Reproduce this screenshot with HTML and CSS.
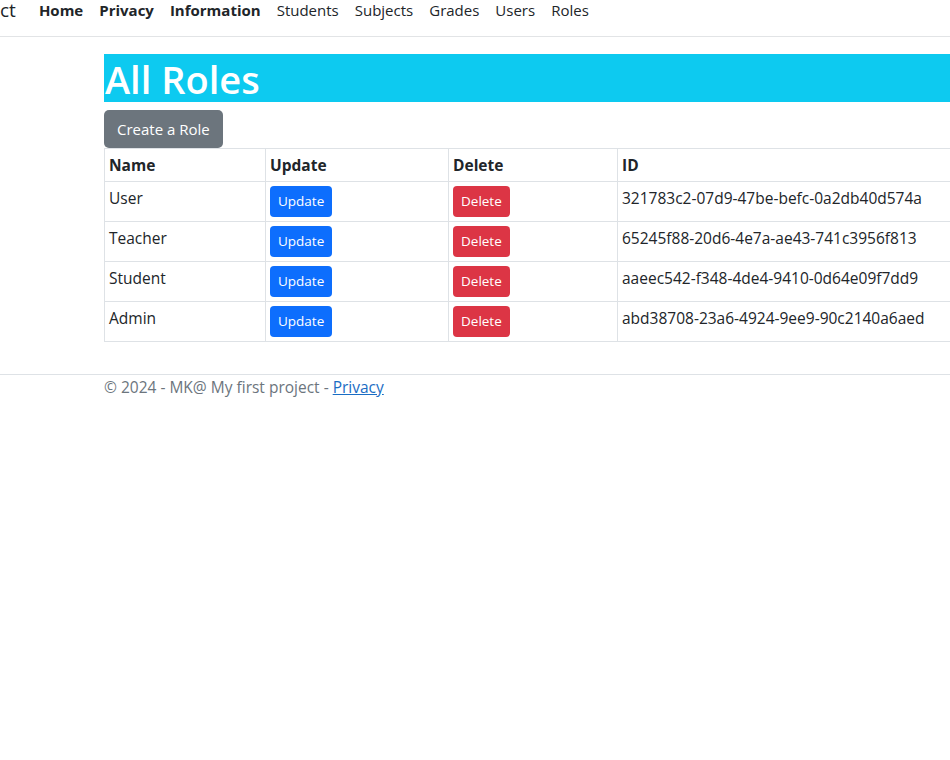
FILE: index.html
```html
<!DOCTYPE html>
<html lang="en">
<head>
<meta charset="utf-8">
<title>All Roles</title>
<link rel="stylesheet" href="styles.css">
</head>
<body>
<header class="navbar">
  <span class="brand">ct</span>
  <nav class="nav">
    <a class="nav-link bold" href="#">Home</a>
    <a class="nav-link bold" href="#">Privacy</a>
    <a class="nav-link bold" href="#">Information</a>
    <a class="nav-link" href="#">Students</a>
    <a class="nav-link" href="#">Subjects</a>
    <a class="nav-link" href="#">Grades</a>
    <a class="nav-link" href="#">Users</a>
    <a class="nav-link" href="#">Roles</a>
  </nav>
</header>
<main class="container">
  <h1 class="title">All Roles</h1>
  <a class="btn btn-secondary" href="#">Create a Role</a>
  <table class="table">
    <thead>
      <tr>
        <th class="col-name">Name</th>
        <th class="col-update">Update</th>
        <th class="col-delete">Delete</th>
        <th>ID</th>
      </tr>
    </thead>
    <tbody>
      <tr>
        <td>User</td>
        <td><a class="btn-sm btn-primary" href="#">Update</a></td>
        <td><a class="btn-sm btn-danger" href="#">Delete</a></td>
        <td>321783c2-07d9-47be-befc-0a2db40d574a</td>
      </tr>
      <tr>
        <td>Teacher</td>
        <td><a class="btn-sm btn-primary" href="#">Update</a></td>
        <td><a class="btn-sm btn-danger" href="#">Delete</a></td>
        <td>65245f88-20d6-4e7a-ae43-741c3956f813</td>
      </tr>
      <tr>
        <td>Student</td>
        <td><a class="btn-sm btn-primary" href="#">Update</a></td>
        <td><a class="btn-sm btn-danger" href="#">Delete</a></td>
        <td>aaeec542-f348-4de4-9410-0d64e09f7dd9</td>
      </tr>
      <tr>
        <td>Admin</td>
        <td><a class="btn-sm btn-primary" href="#">Update</a></td>
        <td><a class="btn-sm btn-danger" href="#">Delete</a></td>
        <td>abd38708-23a6-4924-9ee9-90c2140a6aed</td>
      </tr>
    </tbody>
  </table>
</main>
<footer class="footer">
  <div class="footer-inner">© 2024 - MK@ My first project - <a class="footer-link" href="#">Privacy</a></div>
</footer>
</body>
</html>
```
FILE: styles.css
```css
html, body {
  margin: 0;
  padding: 0;
  overflow: hidden;
}
body {
  font-family: "Open Sans", "Noto Sans", sans-serif;
  font-size: 15.5px;
  color: #212529;
  background: #fff;
  width: 950px;
}
.navbar {
  display: flex;
  align-items: flex-start;
  height: 37px;
  border-bottom: 1px solid #e2e4e6;
  box-sizing: border-box;
  font-size: 15px;
}
.brand {
  font-size: 19px;
  line-height: 22px;
  margin-right: 15px;
  margin-top: -1px;
}
.nav {
  display: flex;
}
.nav-link {
  color: #212529;
  text-decoration: none;
  padding: 0 8px;
  line-height: 20px;
}
.nav-link.bold {
  font-weight: 700;
}
.container {
  margin-left: 104px;
  width: 1000px;
}
.title {
  margin: 17px 0 8px;
  background: #0dcaf0;
  color: #fff;
  font-size: 38px;
  font-weight: 600;
  line-height: 46px;
  padding: 2px 0 0 1px;
}
.btn {
  display: inline-block;
  text-decoration: none;
  font-size: 15px;
  line-height: 24px;
  padding: 7px 13px;
  border-radius: 5px;
  vertical-align: top;
}
.btn-secondary {
  background: #6c757d;
  color: #fff;
}
.table {
  border-collapse: collapse;
  width: 1000px;
  margin-bottom: 32px;
}
.table th, .table td {
  border: 1px solid #dee2e6;
  text-align: left;
  vertical-align: top;
  padding: 4px;
  line-height: 24px;
}
.table th {
  font-weight: 700;
}
.col-name { width: 152px; }
.col-update { width: 174px; }
.col-delete { width: 160px; }
.btn-sm {
  display: inline-block;
  text-decoration: none;
  font-size: 13.5px;
  line-height: 21px;
  padding: 5px 8px;
  border-radius: 4px;
  color: #fff;
  vertical-align: top;
}
.btn-primary { background: #0d6efd; }
.btn-danger { background: #dc3545; }
.footer {
  border-top: 1px solid #dee2e6;
  line-height: 24px;
}
.footer-inner {
  margin-left: 104px;
  color: #6c757d;
}
.footer-link {
  color: #1a6dc4;
}
```
